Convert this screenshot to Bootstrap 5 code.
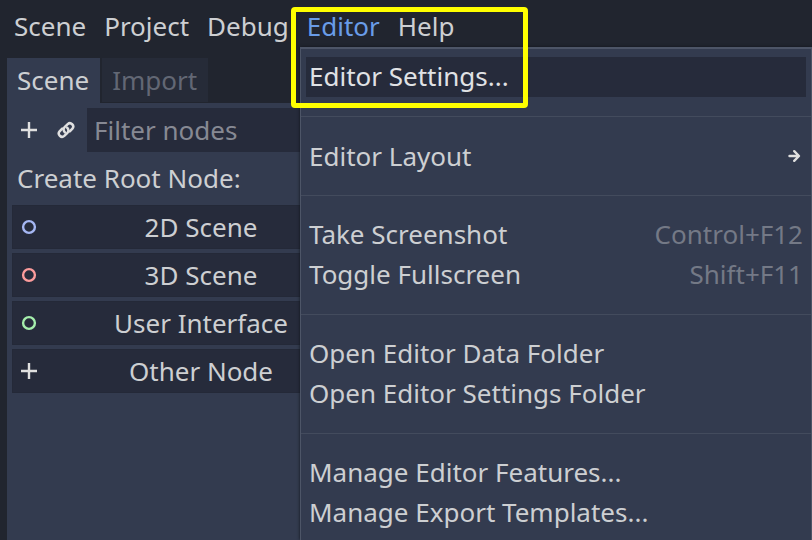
<!DOCTYPE html>
<html lang="en">
<head>
<meta charset="utf-8">
<meta name="viewport" content="width=device-width, initial-scale=1">
<title>Editor</title>
<link href="https://cdn.jsdelivr.net/npm/bootstrap@5.3.0/dist/css/bootstrap.min.css" rel="stylesheet">
<style>
  :root { --base: #21252f; --panel: #333b4f; --well: #262b3b; --ink: #cdcfd2; --line: #434b5d; }
  body { background: var(--base); color: var(--ink); font: 26px/40px "Noto Sans", sans-serif; }
  button, input { font: inherit; color: inherit; }
  .menubar { padding: 6px 14px 8px; gap: 18px; }
  .menubar button { padding: 0; border: 0; background: none; color: var(--ink); }
  .menubar .opened { color: #699ce8; }
  .dock { width: 388px; margin: 4px 0 0 7px; }
  .dock-tab { height: 45px; padding: 0 11px 0 10px; border: 0; background: var(--panel); color: var(--ink); line-height: 45px; }
  .dock-tab.idle { height: 44px; margin-left: 2px; background: #262b38; color: #626774; }
  .dock-body { background: var(--panel); padding: 5px; }
  .tool { width: 34px; height: 44px; padding: 0; border: 0; background: none; }
  .tool + .tool { margin-left: 3px; }
  .filter { height: 44px; padding: 0 7px; border: 0; border-radius: 0; background: var(--well); min-width: 0; }
  .filter::placeholder { color: #868993; opacity: 1; }
  .create-label { height: 53px; line-height: 52px; padding-left: 5px; }
  .create { height: 44px; line-height: 40px; padding: 0 8px; border: 1px solid #242938; background: var(--well); color: var(--ink); gap: 4px; }
  .create span { padding-right: 20px; }
  .popup { top: 47px; left: 300px; right: 0; min-height: calc(100vh - 47px); padding: 8px 0 7px; background: var(--panel); border: 1px solid #4d5567; border-top-width: 2px; border-bottom: 0; box-shadow: 0 0 3px #12151c; }
  .popup button { display: flex; margin: 0 5px; height: 40px; line-height: 39px; padding: 0 3px; border: 0; background: none; color: var(--ink); text-align: left; }
  .popup .current { background: var(--well); color: #e0e2e5; }
  .popup kbd { padding: 0; background: none; font: inherit; color: #747986; }
  .popup hr { margin: 19px 0; border-color: var(--line); opacity: 1; }
  .callout { top: 7px; left: 291px; width: 237px; height: 101px; border: 5px solid #ff0; border-radius: 4px; pointer-events: none; }
</style>
<script src="https://cdn.jsdelivr.net/npm/bootstrap@5.3.0/dist/js/bootstrap.bundle.min.js"></script>
</head>
<body class="position-relative min-vh-100 d-flex flex-column">
  <nav class="menubar d-flex" aria-label="Main menu">
    <button type="button">Scene</button>
    <button type="button">Project</button>
    <button type="button">Debug</button>
    <button type="button" class="opened" aria-expanded="true">Editor</button>
    <button type="button">Help</button>
  </nav>

  <main class="dock d-flex flex-column flex-grow-1">
    <div class="d-flex" role="tablist">
      <button type="button" class="dock-tab" role="tab" aria-selected="true">Scene</button>
      <button type="button" class="dock-tab idle" role="tab" aria-selected="false">Import</button>
    </div>
    <section class="dock-body flex-grow-1">
      <div class="d-flex">
        <button type="button" class="tool flex-shrink-0 d-flex align-items-center justify-content-center" aria-label="Add node">
          <svg width="18" height="18" viewBox="0 0 18 18"><path d="M9 1v16M1 9h16" stroke="#e0e0e0" stroke-width="2.4"/></svg>
        </button>
        <button type="button" class="tool flex-shrink-0 d-flex align-items-center justify-content-center" aria-label="Instance scene">
          <svg width="18" height="18" viewBox="0 0 18 18" fill="none" stroke="#e0e0e0" stroke-width="2.5" stroke-linecap="round"><path d="M7.8 11.2A3.4 3.4 0 0 1 7.6 6.2L10.7 3.1A3.3 3.3 0 0 1 15.4 7.7L12.8 10.300"/><path d="M10.2 6.8A3.4 3.4 0 0 1 10.4 11.8L7.3 14.9A3.3 3.3 0 0 1 2.6 10.3L5.2 7.700"/></svg>
        </button>
        <input type="text" class="filter flex-grow-1 ms-1" placeholder="Filter nodes" aria-label="Filter nodes">
      </div>
      <div class="create-label">Create Root Node:</div>
      <div class="d-grid gap-1">
        <button type="button" class="create d-flex align-items-center">
          <svg width="16" height="16" viewBox="0 0 16 16"><circle cx="8" cy="8" r="5.9" fill="none" stroke="#a5b7f3" stroke-width="2.4"/></svg>
          <span class="flex-grow-1">2D Scene</span>
        </button>
        <button type="button" class="create d-flex align-items-center">
          <svg width="16" height="16" viewBox="0 0 16 16"><circle cx="8" cy="8" r="5.9" fill="none" stroke="#fc9c9c" stroke-width="2.4"/></svg>
          <span class="flex-grow-1">3D Scene</span>
        </button>
        <button type="button" class="create d-flex align-items-center">
          <svg width="16" height="16" viewBox="0 0 16 16"><circle cx="8" cy="8" r="5.9" fill="none" stroke="#a5efac" stroke-width="2.4"/></svg>
          <span class="flex-grow-1">User Interface</span>
        </button>
        <button type="button" class="create d-flex align-items-center">
          <svg width="16" height="16" viewBox="0 0 16 16"><path d="M8 0v16M0 8h16" stroke="#e0e0e0" stroke-width="2.4"/></svg>
          <span class="flex-grow-1">Other Node</span>
        </button>
      </div>
    </section>
  </main>

  <div class="popup position-absolute d-flex flex-column" role="menu" aria-label="Editor">
    <button type="button" role="menuitem" class="current">Editor Settings...</button>
    <hr>
    <button type="button" role="menuitem" class="align-items-center justify-content-between">Editor Layout
      <svg width="16" height="16" viewBox="0 0 16 16" fill="none" stroke="#e0e0e0" stroke-width="2.4" stroke-linecap="round" stroke-linejoin="round"><path d="M2.500 8H11.500M7.200 3.200L12 8L7.200 12.800"/></svg>
    </button>
    <hr>
    <button type="button" role="menuitem" class="justify-content-between">Take Screenshot <kbd>Control+F12</kbd></button>
    <button type="button" role="menuitem" class="justify-content-between">Toggle Fullscreen <kbd>Shift+F11</kbd></button>
    <hr>
    <button type="button" role="menuitem">Open Editor Data Folder</button>
    <button type="button" role="menuitem">Open Editor Settings Folder</button>
    <hr>
    <button type="button" role="menuitem">Manage Editor Features...</button>
    <button type="button" role="menuitem">Manage Export Templates...</button>
  </div>

  <div class="callout position-absolute"></div>
</body>
</html>
